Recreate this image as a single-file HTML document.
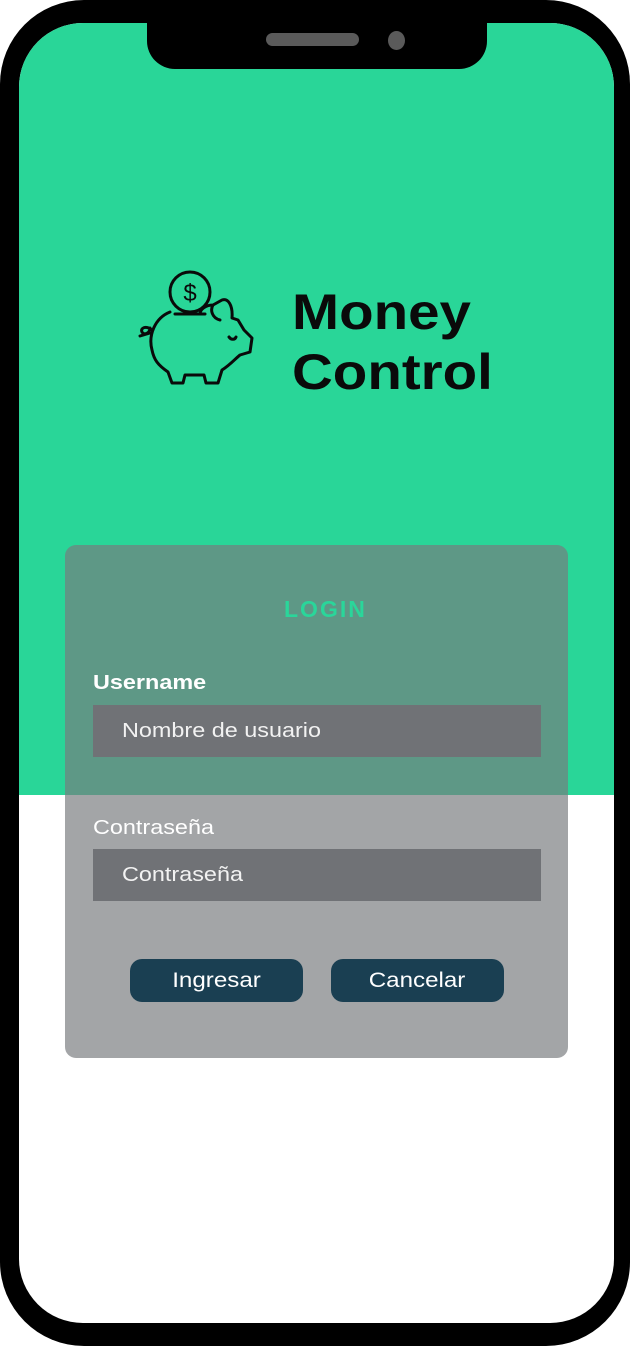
<!DOCTYPE html>
<html><head><meta charset="utf-8"><style>
*{margin:0;padding:0;box-sizing:border-box}
body{width:630px;height:1346px;background:#fff;position:relative;overflow:hidden;font-family:"Liberation Sans",sans-serif}
.frame{position:absolute;left:0;top:0;width:630px;height:1346px;background:#000;border-radius:84px}
.screen{position:absolute;left:19px;top:23px;width:595px;height:1300px;background:#fff;border-radius:64px;overflow:hidden}
.green{position:absolute;left:0;top:0;width:100%;height:772px;background:#29d698}
.notch{position:absolute;left:147px;top:10px;width:340px;height:59px;background:#000;border-radius:0 0 28px 28px}
.spk{position:absolute;left:266px;top:33px;width:93px;height:13px;background:#5a5a5a;border-radius:7px}
.cam{position:absolute;left:388px;top:31px;width:17px;height:19px;background:#5a5a5a;border-radius:50%}
.s{display:inline-block;transform:scaleX(1.17);transform-origin:left center}
.title{position:absolute;left:292px;top:282px;font-size:50px;font-weight:bold;line-height:60px;color:#0a0a0a;transform:scaleX(1.13);transform-origin:left top}
.card{position:absolute;left:65px;top:545px;width:503px;height:513px;background:rgba(120,122,125,0.68);border-radius:11px}
.login{position:absolute;left:284px;top:596px;color:#2ad69a;font-weight:bold;font-size:23px;letter-spacing:2px}
.lbl{position:absolute;left:93px;color:#fff;font-size:20px}
.inp{position:absolute;left:93px;width:448px;height:52px;background:#707276;color:#f2f2f2;font-size:20px;padding-left:29px;line-height:52px}
.btn{position:absolute;top:959px;height:43px;width:173px;background:#1a3f52;border-radius:12px;color:#fff;font-size:21px;text-align:center;line-height:43px}
.btn span{display:inline-block;transform:scaleX(1.15)}
</style></head><body>
<div class="frame"></div>
<div class="screen"><div class="green"></div></div>
<div class="notch"></div>
<div class="spk"></div><div class="cam"></div>
<svg style="position:absolute;left:130px;top:265px" width="135" height="125" viewBox="130 265 135 125" fill="none" stroke="#0a0a0a" stroke-width="3" stroke-linecap="round" stroke-linejoin="round">
<circle cx="190" cy="292" r="20"/>
<text x="190" y="301" font-size="24" font-family="Liberation Sans" text-anchor="middle" fill="#0a0a0a" stroke="none">$</text>
<path d="M175 314 H205"/>
<path d="M170 312 C155 318 148 335 152 350 C154 360 158 365 168 372 L172 383 H183 L185 375 H204 L206 383 H218 L222 370 C230 365 236 358 240 355 L250 352 L252 338 L244 330 L238 320 L232 318 C233 305 228 298 222 300 L213 305 C210 310 212 318 220 320 M213 305 C205 305 200 310 200 314"/>
<path d="M152 330 C146 325 140 328 142 332 C144 336 150 333 150 328 M140 336 L150 333"/>
<path d="M229 337 C231 340 235 340 236 337"/>
</svg>
<div class="title">Money<br>Control</div>
<div class="card"></div>
<div class="login">LOGIN</div>
<div class="lbl" style="top:672px;font-weight:bold"><span class="s">Username</span></div>
<div class="inp" style="top:705px"><span class="s">Nombre de usuario</span></div>
<div class="lbl" style="top:817px"><span class="s">Contraseña</span></div>
<div class="inp" style="top:849px"><span class="s">Contraseña</span></div>
<div class="btn" style="left:130px"><span>Ingresar</span></div>
<div class="btn" style="left:331px"><span>Cancelar</span></div>
</body></html>
